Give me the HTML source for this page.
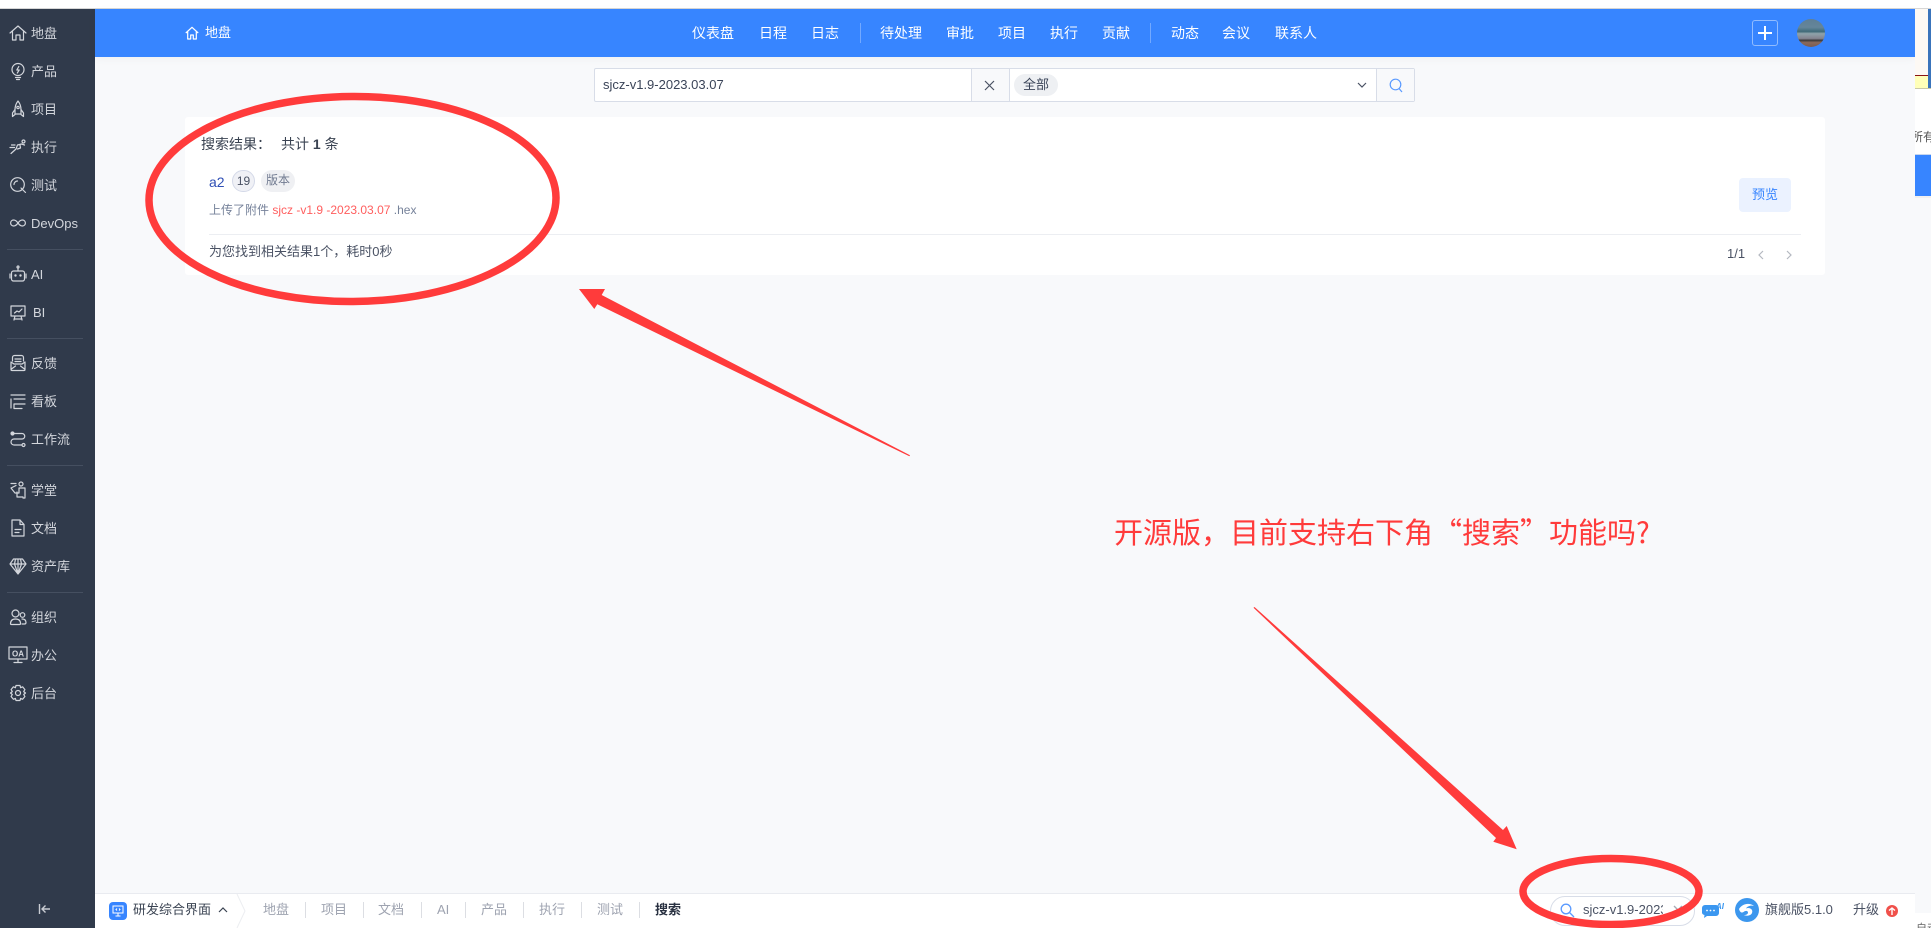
<!DOCTYPE html>
<html lang="zh"><head><meta charset="utf-8"><title>搜索</title>
<style>
*{box-sizing:border-box}
html,body{margin:0;padding:0;width:1931px;height:928px;overflow:hidden;background:#f8f9fb;font-family:"Liberation Sans","Noto Sans CJK SC",sans-serif;color:#313c52}
.a{position:absolute;white-space:nowrap}
#side{position:absolute;left:0;top:9px;width:95px;height:919px;background:#303a4b}
.si{position:absolute;left:31px;font-size:13px;line-height:18px;color:#d3d6dc;white-space:nowrap;transform:translateY(-8px)}
.ic{position:absolute;left:9px;width:18px;height:18px;transform:translateY(-9px);fill:none;stroke:#d3d6dc;stroke-width:1.2;stroke-linecap:round;stroke-linejoin:round;overflow:visible}
.dv{position:absolute;left:7px;width:76px;height:1px;background:#454f60}
.nv{position:absolute;top:24px;font-size:14px;line-height:18px;color:#fff;white-space:nowrap}
.vl{position:absolute;top:23px;width:1px;height:20px;background:rgba(255,255,255,.3)}
.bi{position:absolute;top:901px;font-size:13px;line-height:18px;color:#9ea3b0;white-space:nowrap}
.bd{position:absolute;top:902px;width:1px;height:16px;background:#dcdee3}
</style></head><body>
<div class="a" style="left:0;top:0;width:1931px;height:8px;background:#fff"></div>
<div class="a" style="left:0;top:8px;width:1931px;height:1px;background:#d6d6d6"></div>

<div id="side"></div>
<!-- sidebar dividers -->
<div class="dv" style="top:249px"></div><div class="dv" style="top:338px"></div><div class="dv" style="top:465px"></div><div class="dv" style="top:592px"></div>

<svg class="ic" style="top:33px" viewBox="0 0 18 18"><path d="M1 9 9 2l8 7M3.500 7.500V16h3.500v-5h4v5h3.500V7.500"/></svg><div class="si" style="top:33px">地盘</div>
<svg class="ic" style="top:71px" viewBox="0 0 18 18"><circle cx="9" cy="7.500" r="6"/><path d="M9.800 4.500 7.800 8h2.400L8.300 11M6.500 15.500h5M7.500 17.500h3"/></svg><div class="si" style="top:71px">产品</div>
<svg class="ic" style="top:109px" viewBox="0 0 18 18"><path d="M9 1C6.500 4 6 7 6 10v4h6v-4c0-3-.5-6-3-9ZM6 9.500 3.500 13v3.500L6 14.500M12 9.500l2.500 3.500v3.500L12 14.500"/><circle cx="9" cy="7.500" r="1.200"/></svg><div class="si" style="top:109px">项目</div>
<svg class="ic" style="top:147px" viewBox="0 0 18 18"><circle cx="14.500" cy="3.500" r="1.500"/><path d="M2 15.500 7 11l1.500-4 4-1 3 1M8.500 11l3-1-.5-3M1 9.500h4.500M2.500 7h3.500"/></svg><div class="si" style="top:147px">执行</div>
<svg class="ic" style="top:185px" viewBox="0 0 18 18"><circle cx="8.500" cy="8.500" r="6.800"/><path d="M12 12l4.500 4.500M8.500 5a3.500 3.500 0 0 0-3.500 3.500"/></svg><div class="si" style="top:185px">测试</div>
<svg class="ic" style="top:223px" viewBox="0 0 18 18"><path d="M9 9C7.500 6.800 6.300 6 4.600 6a3 3 0 0 0 0 6C6.300 12 7.500 11.200 9 9c1.500-2.200 2.700-3 4.400-3a3 3 0 0 1 0 6c-1.700 0-2.900-.8-4.400-3Z"/></svg><div class="si" style="top:223px">DevOps</div>
<svg class="ic" style="top:274px" viewBox="0 0 18 18"><rect x="2.500" y="6" width="13" height="10" rx="2"/><path d="M9 6V3M1 9v4M17 9v4"/><circle cx="9" cy="2" r="1"/><circle cx="6.500" cy="10.500" r=".6"/><circle cx="11.500" cy="10.500" r=".6"/></svg><div class="si" style="top:274px">AI</div>
<svg class="ic" style="top:312px" viewBox="0 0 18 18"><path d="M2 3h14v10H2zM6 13l-1 4M12 13l1 4M5 16h8M5.500 10 8 8l2 1 3-3"/></svg><div class="si" style="top:312px;left:33px">BI</div>

<svg class="ic" style="top:363px" viewBox="0 0 18 18"><path d="M3.500 7V3.500a2 2 0 0 1 2-2h7a2 2 0 0 1 2 2V7M2 8v7.500a1 1 0 0 0 1 1h12a1 1 0 0 0 1-1V8l-3 2H5ZM6 5h6M6 7.500h6M2.500 15l4-3M15.500 15l-4-3"/></svg><div class="si" style="top:363px">反馈</div>
<svg class="ic" style="top:401px" viewBox="0 0 18 18"><path d="M2 3h14M2 7v9M5 7h11M5 12h11M5 16.500h8M5 12v4.500"/></svg><div class="si" style="top:401px">看板</div>
<svg class="ic" style="top:439px" viewBox="0 0 18 18"><circle cx="3.500" cy="3.500" r="1.500" fill="#d3d6dc"/><circle cx="14.500" cy="15" r="1.500"/><path d="M5 3.500h8a2.700 2.700 0 0 1 0 5.500H5a2.800 2.800 0 0 0 0 6h8"/></svg><div class="si" style="top:439px">工作流</div>
<svg class="ic" style="top:490px" viewBox="0 0 18 18"><circle cx="12" cy="3" r="2"/><path d="M2 2.500h5M2 7l5-2.500M2 7l4 5h4V7h6v10h-2"/><path d="M8 11v5h6"/></svg><div class="si" style="top:490px">学堂</div>
<svg class="ic" style="top:528px" viewBox="0 0 18 18"><path d="M3 1h8l4 4.500V17H3ZM11 1v4.500h4M6 10.500h6M6 13.500h4"/></svg><div class="si" style="top:528px">文档</div>
<svg class="ic" style="top:566px" viewBox="0 0 18 18"><path d="M4.500 2h9L17 7l-8 10L1 7ZM1 7h16M6.500 2 5.500 7 9 17l3.500-10-1-5M9 2v15"/></svg><div class="si" style="top:566px">资产库</div>
<svg class="ic" style="top:617px" viewBox="0 0 18 18"><circle cx="6.500" cy="5.500" r="3.500"/><path d="M1.500 16c0-3.500 2-5 5-5s5 1.500 5 4.500c0 1-1 1-1 1H2.500s-1 0-1-.5Z"/><circle cx="13.500" cy="7" r="2.300"/><path d="M13 11c2.500 0 4 1 4 3.500 0 1-.5 1.500-1.500 1.500H13"/></svg><div class="si" style="top:617px">组织</div>
<svg class="ic" style="top:655px;left:8px;width:20px" viewBox="0 0 20 18"><path d="M1 1h18v12H1zM10 13v3M6 16.500h8"/><text x="10" y="10.500" text-anchor="middle" font-family="Liberation Sans,sans-serif" font-size="8" font-weight="700" fill="#d3d6dc" stroke="none">OA</text></svg><div class="si" style="top:655px">办公</div>
<svg class="ic" style="top:693px" viewBox="0 0 18 18"><path d="M7 1.500h4l.6 2.200 2-.9 2.300 2.800-1.200 2 1.800 1.400-1.800 1.500 1.200 2-2.300 2.800-2-.9L11 16.500H7l-.6-2.100-2 .9-2.300-2.800 1.200-2L1.500 9l1.800-1.400-1.200-2 2.300-2.800 2 .9Z"/><circle cx="9" cy="9" r="2.500"/></svg><div class="si" style="top:693px">后台</div>
<svg class="a" style="left:38px;top:903px" width="13" height="12" viewBox="0 0 13 12" fill="none" stroke="#c9ccd3" stroke-width="1.400"><path d="M1.500 1v10M12 6H4M7.500 2.500 4 6l3.500 3.500"/></svg>

<!-- top nav -->
<div class="a" style="left:95px;top:9px;width:1820px;height:48px;background:#3785ff;box-shadow:0 2px 8px rgba(0,0,0,.04)"></div>
<svg class="a" style="left:185px;top:26px" width="14" height="14" viewBox="0 0 14 14" fill="none" stroke="#fff" stroke-width="1.200" stroke-linejoin="round"><path d="M.8 7 7 1.300 13.200 7M2.700 5.500V13h3V9h2.600v4h3V5.500"/></svg>
<div class="nv" style="left:205px;font-size:13px">地盘</div>
<div class="nv" style="left:692px">仪表盘</div><div class="nv" style="left:759px">日程</div><div class="nv" style="left:811px">日志</div><div class="vl" style="left:860px"></div>
<div class="nv" style="left:880px">待处理</div><div class="nv" style="left:946px">审批</div><div class="nv" style="left:998px">项目</div><div class="nv" style="left:1050px">执行</div><div class="nv" style="left:1102px">贡献</div><div class="vl" style="left:1150px"></div>
<div class="nv" style="left:1171px">动态</div><div class="nv" style="left:1222px">会议</div><div class="nv" style="left:1275px">联系人</div>
<div class="a" style="left:1752px;top:20px;width:26px;height:26px;border:1px solid rgba(255,255,255,.45);border-radius:3px"></div>
<div class="a" style="left:1758px;top:32px;width:14px;height:2px;background:#fff"></div><div class="a" style="left:1764px;top:26px;width:2px;height:14px;background:#fff"></div>
<div class="a" style="left:1797px;top:19px;width:28px;height:28px;border-radius:50%;background:linear-gradient(180deg,#5f7f95 0,#64859a 30%,#3f6a78 45%,#8ea3ab 52%,#83838f 70%,#3b3a3c 76%,#8a6a5c 84%,#7a5a50 100%)"></div>

<!-- right sliver -->
<div class="a" style="left:1915px;top:0;width:16px;height:89px;background:#fdf9f4"></div>
<div class="a" style="left:1915px;top:0;width:16px;height:8px;background:#fff"></div>
<div class="a" style="left:1915px;top:8px;width:16px;height:1px;background:#d6d6d6"></div>
<div class="a" style="left:1928px;top:9px;width:3px;height:80px;background:#3a74bb"></div>
<div class="a" style="left:1915px;top:75px;width:13px;height:1px;background:#8a1414"></div>
<div class="a" style="left:1915px;top:76px;width:13px;height:12px;background:#ffffb8"></div>
<div class="a" style="left:1915px;top:88px;width:16px;height:1px;background:#c9c9a8"></div>
<div class="a" style="left:1915px;top:89px;width:16px;height:65px;background:#fff;overflow:hidden"><div class="a" style="left:-4px;top:39px;font-size:12px;color:#555">所有</div></div>
<div class="a" style="left:1915px;top:154px;width:16px;height:42px;background:#3785ff;border-top:1px solid #c6d6ee"></div>
<div class="a" style="left:1915px;top:196px;width:16px;height:2px;background:#f0f0f0"></div>
<div class="a" style="left:1915px;top:913px;width:16px;height:15px;background:#fff;overflow:hidden"><div class="a" style="left:1px;top:7px;font-size:11px;color:#666">自动</div></div>

<!-- search bar -->
<div class="a" style="left:594px;top:68px;width:821px;height:34px;background:#fff;border:1px solid #d8dde8;border-radius:2px"></div>
<div class="a" style="left:971px;top:69px;width:39px;height:32px;background:#f8f9fb;border-left:1px solid #d8dde8;border-right:1px solid #d8dde8"></div>
<div class="a" style="left:1376px;top:69px;width:38px;height:32px;background:#f8f9fb;border-left:1px solid #d8dde8"></div>
<div class="a" style="left:603px;top:76px;font-size:13px;line-height:18px;color:#3a4458">sjcz-v1.9-2023.03.07</div>
<svg class="a" style="left:984px;top:80px" width="11" height="11" viewBox="0 0 11 11" fill="none" stroke="#4a5264" stroke-width="1.200"><path d="M1 1l9 9M10 1l-9 9"/></svg>
<div class="a" style="left:1014px;top:74px;width:44px;height:22px;border-radius:11px;background:#eef0f3;font-size:13px;line-height:22px;text-align:center;color:#3a4458">全部</div>
<svg class="a" style="left:1357px;top:82px" width="10" height="7" viewBox="0 0 10 7" fill="none" stroke="#4a5264" stroke-width="1.200"><path d="M1 1l4 4 4-4"/></svg>
<svg class="a" style="left:1389px;top:78px" width="14" height="15" viewBox="0 0 14 15" fill="none" stroke="#5a9aff" stroke-width="1.200"><circle cx="6.500" cy="6.500" r="5.300"/><path d="M10 10.500l3 3.500"/></svg>

<!-- results card -->
<div class="a" style="left:185px;top:117px;width:1640px;height:158px;background:#fff;border-radius:3px"></div>
<div class="a" style="left:201px;top:135px;font-size:14px;line-height:18px;color:#3a4352">搜索结果：</div>
<div class="a" style="left:281px;top:135px;font-size:14px;line-height:18px;color:#3a4352">共计 <b>1</b> 条</div>
<div class="a" style="left:209px;top:173px;font-size:14px;line-height:18px;color:#2f4fb5">a2</div>
<div class="a" style="left:232px;top:170px;width:23px;height:22px;border-radius:11px;background:#f0f1f6;border:1px solid #d4d9e8;font-size:12px;line-height:20px;text-align:center;color:#4a5264">19</div>
<div class="a" style="left:261px;top:170px;width:34px;height:22px;border-radius:11px;background:#eff0f3;font-size:12px;line-height:21px;text-align:center;color:#717b91">版本</div>
<div class="a" style="left:209px;top:201px;font-size:12px;line-height:18px;color:#76829a">上传了附件 <span style="color:#ff5e5e">sjcz -v1.9 -2023.03.07</span> .hex</div>
<div class="a" style="left:1739px;top:178px;width:52px;height:34px;background:#ebf2ff;border-radius:4px;font-size:13px;line-height:34px;text-align:center;color:#3785ff">预览</div>
<div class="a" style="left:209px;top:234px;width:1592px;height:1px;background:#eceef2"></div>
<div class="a" style="left:209px;top:243px;font-size:13px;line-height:18px;color:#4a5264">为您找到相关结果1个，耗时0秒</div>
<div class="a" style="left:1727px;top:245px;font-size:13px;line-height:18px;color:#4a5264">1/1</div>
<svg class="a" style="left:1758px;top:250px" width="6" height="10" viewBox="0 0 6 10" fill="none" stroke="#b4b8c0" stroke-width="1.200"><path d="M5 1 1 5l4 4"/></svg>
<svg class="a" style="left:1786px;top:250px" width="6" height="10" viewBox="0 0 6 10" fill="none" stroke="#b4b8c0" stroke-width="1.200"><path d="M1 1l4 4-4 4"/></svg>

<!-- bottom bar -->
<div class="a" style="left:95px;top:893px;width:1820px;height:35px;background:#fff;border-top:1px solid #e9ebf0"></div>
<div class="a" style="left:109px;top:902px;width:18px;height:18px;border-radius:4px;background:#3785ff"></div>
<svg class="a" style="left:112px;top:905px" width="12" height="12" viewBox="0 0 12 12" fill="none" stroke="#fff" stroke-width="1"><path d="M1 1h10v7H1zM6 8v2.500M3.500 11h5M5 3.500 4 4.500l1 1M7 3.500l1 1-1 1"/></svg>
<div class="a" style="left:133px;top:901px;font-size:13px;line-height:18px;color:#3a4352">研发综合界面</div>
<svg class="a" style="left:218px;top:906px" width="10" height="7" viewBox="0 0 10 7" fill="none" stroke="#3a4352" stroke-width="1.200"><path d="M1 6l4-4 4 4"/></svg>
<svg class="a" style="left:236px;top:894px" width="10" height="34" viewBox="0 0 10 34" fill="none" stroke="#eceef1"><path d="M1 0l8 17-8 17"/></svg>
<div class="bi" style="left:263px">地盘</div><div class="bd" style="left:305px"></div>
<div class="bi" style="left:321px">项目</div><div class="bd" style="left:363px"></div>
<div class="bi" style="left:378px">文档</div><div class="bd" style="left:421px"></div>
<div class="bi" style="left:437px">AI</div><div class="bd" style="left:465px"></div>
<div class="bi" style="left:481px">产品</div><div class="bd" style="left:523px"></div>
<div class="bi" style="left:539px">执行</div><div class="bd" style="left:581px"></div>
<div class="bi" style="left:597px">测试</div><div class="bd" style="left:639px"></div>
<div class="bi" style="left:655px;color:#2a3242;font-weight:700">搜索</div>

<div class="a" style="left:1550px;top:896px;width:145px;height:30px;border:1px solid #d8dde8;border-radius:15px;background:#fff"></div>
<svg class="a" style="left:1560px;top:903px" width="15" height="15" viewBox="0 0 15 15" fill="none" stroke="#5a9aff" stroke-width="1.300"><circle cx="6" cy="6" r="4.800"/><path d="M9.500 9.500l4.500 4.500"/></svg>
<div class="a" style="left:1583px;top:901px;width:80px;overflow:hidden;font-size:13px;line-height:18px;color:#4a5264">sjcz-v1.9-2023.03.07</div>
<svg class="a" style="left:1673px;top:905px" width="10" height="10" viewBox="0 0 10 10" fill="none" stroke="#a8acb5" stroke-width="1.400"><path d="M1 1l8 8M9 1 1 9"/></svg>
<svg class="a" style="left:1702px;top:899px" width="22" height="22" viewBox="0 0 22 22"><path d="M3 6h11a3 3 0 0 1 3 3v5a3 3 0 0 1-3 3H5l-3 2 .5-3A3 3 0 0 1 0 14V9a3 3 0 0 1 3-3Z" fill="#3b97f0"/><circle cx="5" cy="11.500" r=".9" fill="#fff"/><circle cx="8.500" cy="11.500" r=".9" fill="#fff"/><circle cx="12" cy="11.500" r=".9" fill="#fff"/><text x="14" y="10" font-family="Liberation Sans,sans-serif" font-size="8" font-weight="700" font-style="italic" fill="#3b97f0">AI</text></svg>
<svg class="a" style="left:1735px;top:898px" width="24" height="24" viewBox="0 0 24 24"><circle cx="12" cy="12" r="12" fill="#3c97ee"/><path d="M4 11c3-5 10-7 15-3-3.500-1-7 .5-8 2.500 3.500-1.500 7.500 1 6 4.500-1 2.500-5 3.500-8 2 2.500 0 4-1 4-2.500s-2-2.500-4.500-.5c-1.500 1.200-3.500.5-4.500-3Z" fill="#fff"/></svg>
<div class="a" style="left:1765px;top:901px;font-size:13px;line-height:18px;color:#4a5264">旗舰版5.1.0</div>
<div class="a" style="left:1853px;top:901px;font-size:13px;line-height:18px;color:#4a5264">升级</div>
<div class="a" style="left:1886px;top:905px;width:12px;height:12px;border-radius:50%;background:#f0504a"></div>
<svg class="a" style="left:1888px;top:907px" width="8" height="8" viewBox="0 0 8 8" fill="none" stroke="#fff" stroke-width="1.400"><path d="M1 3.500 4 1l3 2.500M4 1v7"/></svg>

<!-- annotations -->
<svg class="a" style="left:0;top:0" width="1931" height="928" viewBox="0 0 1931 928" fill="none">
<ellipse cx="352.500" cy="199" rx="203.500" ry="102.500" stroke="#ff3b3b" stroke-width="7.500" transform="rotate(-.4 352 199)"/>
<ellipse cx="1611" cy="891.500" rx="88" ry="33" stroke="#ff3b3b" stroke-width="7.500"/>
<polygon fill="#ff3b3b" points="579,289 605,289 601.700,295 910,455.300 909.400,456.300 597.300,304.300 594.300,309"/>
<polygon fill="#ff3b3b" points="1254.500,607 1503,830 1506.700,826 1516.700,849.300 1493.300,841.700 1496,838 1253.500,607.800"/>
</svg>
<div class="a" style="left:1114px;top:511px;font-family:'Noto Sans CJK SC',sans-serif;font-size:29px;line-height:40px;color:#ff3b3b">开源版，目前支持右下角“搜索”功能吗?</div>
</body></html>
